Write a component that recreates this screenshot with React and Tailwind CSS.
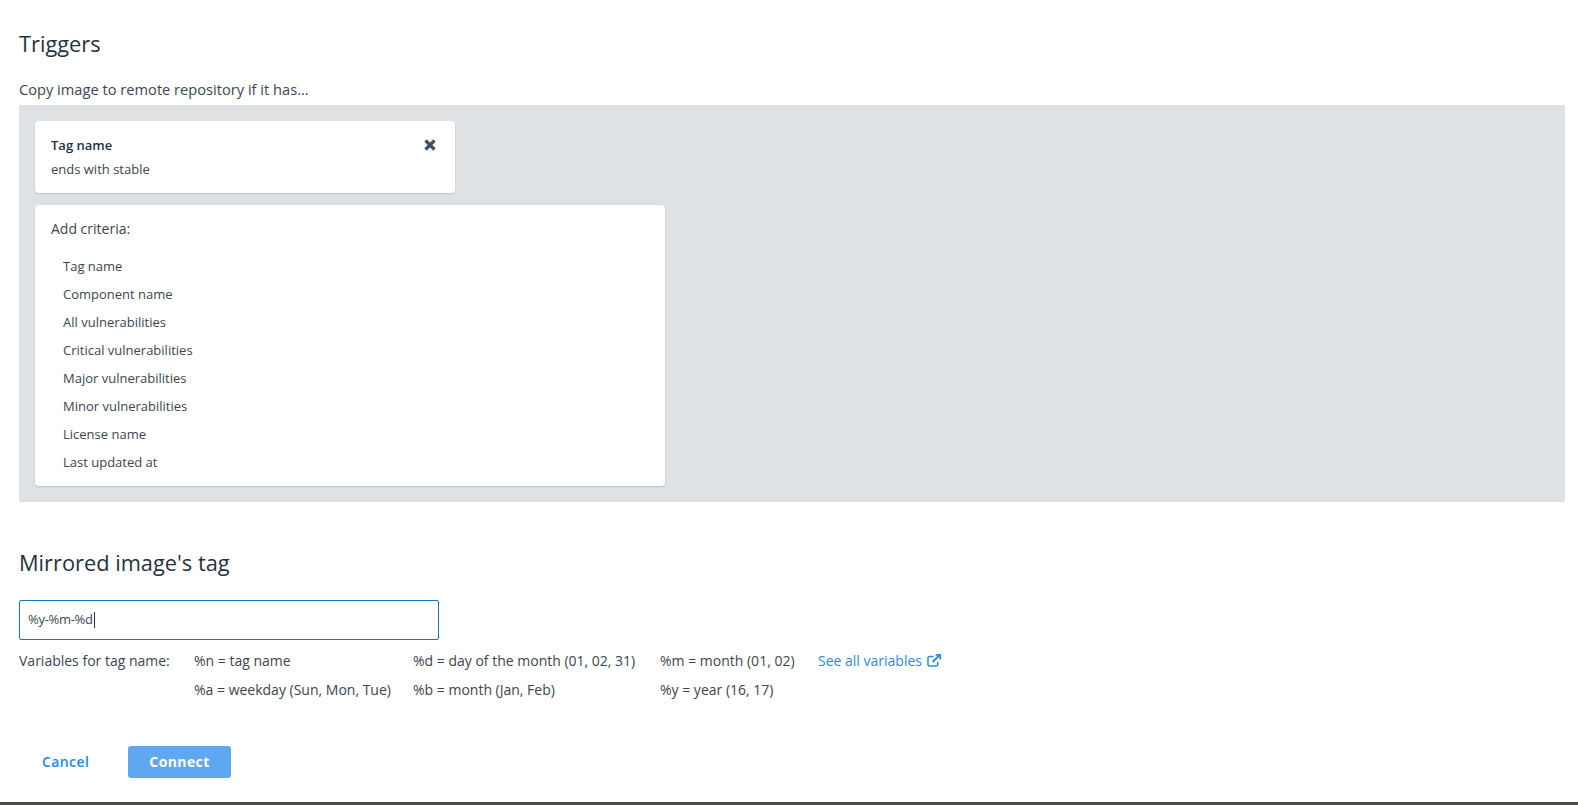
const criteria = [
  "Tag name",
  "Component name",
  "All vulnerabilities",
  "Critical vulnerabilities",
  "Major vulnerabilities",
  "Minor vulnerabilities",
  "License name",
  "Last updated at",
];

const App = () => {
  return (
    <div className="w-[1578px] h-[805px] overflow-hidden bg-white flex flex-col font-['Open_Sans',sans-serif] text-[13px] text-[#3c4650]">
      <div className="flex-1 pl-[19px] pr-[13px] pt-[30px]">
        <h2 className="text-[21.8px] leading-[28px] font-medium text-[#26323d]">Triggers</h2>
        <p className="mt-[21px] leading-[20px] text-[14.65px]">Copy image to remote repository if it has...</p>
        <div className="mt-[6px] bg-[#dfe2e5] p-[16px] flex flex-col gap-[12px]">
          <div className="w-[420px] h-[72px] bg-white rounded-[4px] shadow-[0_1px_2px_rgba(0,0,0,0.15)] pl-[16px] pr-[19px] pt-[12px] flex justify-between">
            <div className="leading-[24px]">
              <div className="font-semibold text-[#26323d]">Tag name</div>
              <div>ends with stable</div>
            </div>
            <svg className="mt-[6px]" width="12" height="12" viewBox="0 0 12 12" stroke="#3f5163" strokeWidth="3.2">
              <path d="M1.5 1.5 10.5 10.5M10.5 1.5 1.5 10.5" />
            </svg>
          </div>
          <div className="w-[630px] h-[281px] bg-white rounded-[4px] shadow-[0_1px_2px_rgba(0,0,0,0.15)] px-[16px] pt-[14px]">
            <div className="leading-[20px] text-[14px]">Add criteria:</div>
            <ul className="mt-[13px] pl-[12px]">
              {criteria.map((c) => (
                <li key={c} className="h-[28px] leading-[28px]">{c}</li>
              ))}
            </ul>
          </div>
        </div>

        <h2 className="mt-[47px] text-[21.8px] leading-[28px] font-medium text-[#26323d]">Mirrored image's tag</h2>
        <div className="mt-[23px] w-[420px] h-[40px] border border-[#1b75bc] rounded-[2px] pl-[8px] flex items-center text-[13px] tracking-[-0.3px]">
          %y-%m-%d<span className="w-px h-[16px] bg-[#26323d] ml-px" />
        </div>
        <div className="mt-[6px] grid grid-cols-[175px_219px_247px_auto] auto-rows-[29px] items-center leading-[20px] text-[14px] w-max">
          <div>Variables for tag name:</div>
          <div>%n = tag name</div>
          <div>%d = day of the month (01, 02, 31)</div>
          <div className="flex">
            <span className="w-[158px]">%m = month (01, 02)</span>
            <a className="text-[#2b8ae6] flex items-center gap-[5px]">
              See all variables
              <svg width="14" height="13" viewBox="0 0 15 14" fill="none" stroke="currentColor" strokeWidth="1.6">
                <path d="M11.5 8v3.2a1.6 1.6 0 0 1-1.6 1.6H2.6A1.6 1.6 0 0 1 1 11.2V4.4a1.6 1.6 0 0 1 1.6-1.6H7" />
                <path d="M6 8.6 13 1.6" strokeWidth="2" />
                <path d="M9.2 1h5v5" strokeWidth="2" />
              </svg>
            </a>
          </div>
          <div />
          <div>%a = weekday (Sun, Mon, Tue)</div>
          <div>%b = month (Jan, Feb)</div>
          <div>%y = year (16, 17)</div>
        </div>
        <div className="mt-[42px] flex items-center text-[14px]">
          <button className="ml-[23px] w-[46px] pb-[1px] text-[#1f87ec] font-semibold tracking-[0.4px]">Cancel</button>
          <button className="ml-[40px] w-[103px] h-[32px] pb-[2px] rounded-[3px] bg-[#5fa8ef] text-white font-bold tracking-[0.4px]">Connect</button>
        </div>
      </div>
      <div className="h-[3px] bg-[#4b4b42]" />
    </div>
  );
};

export default App;
